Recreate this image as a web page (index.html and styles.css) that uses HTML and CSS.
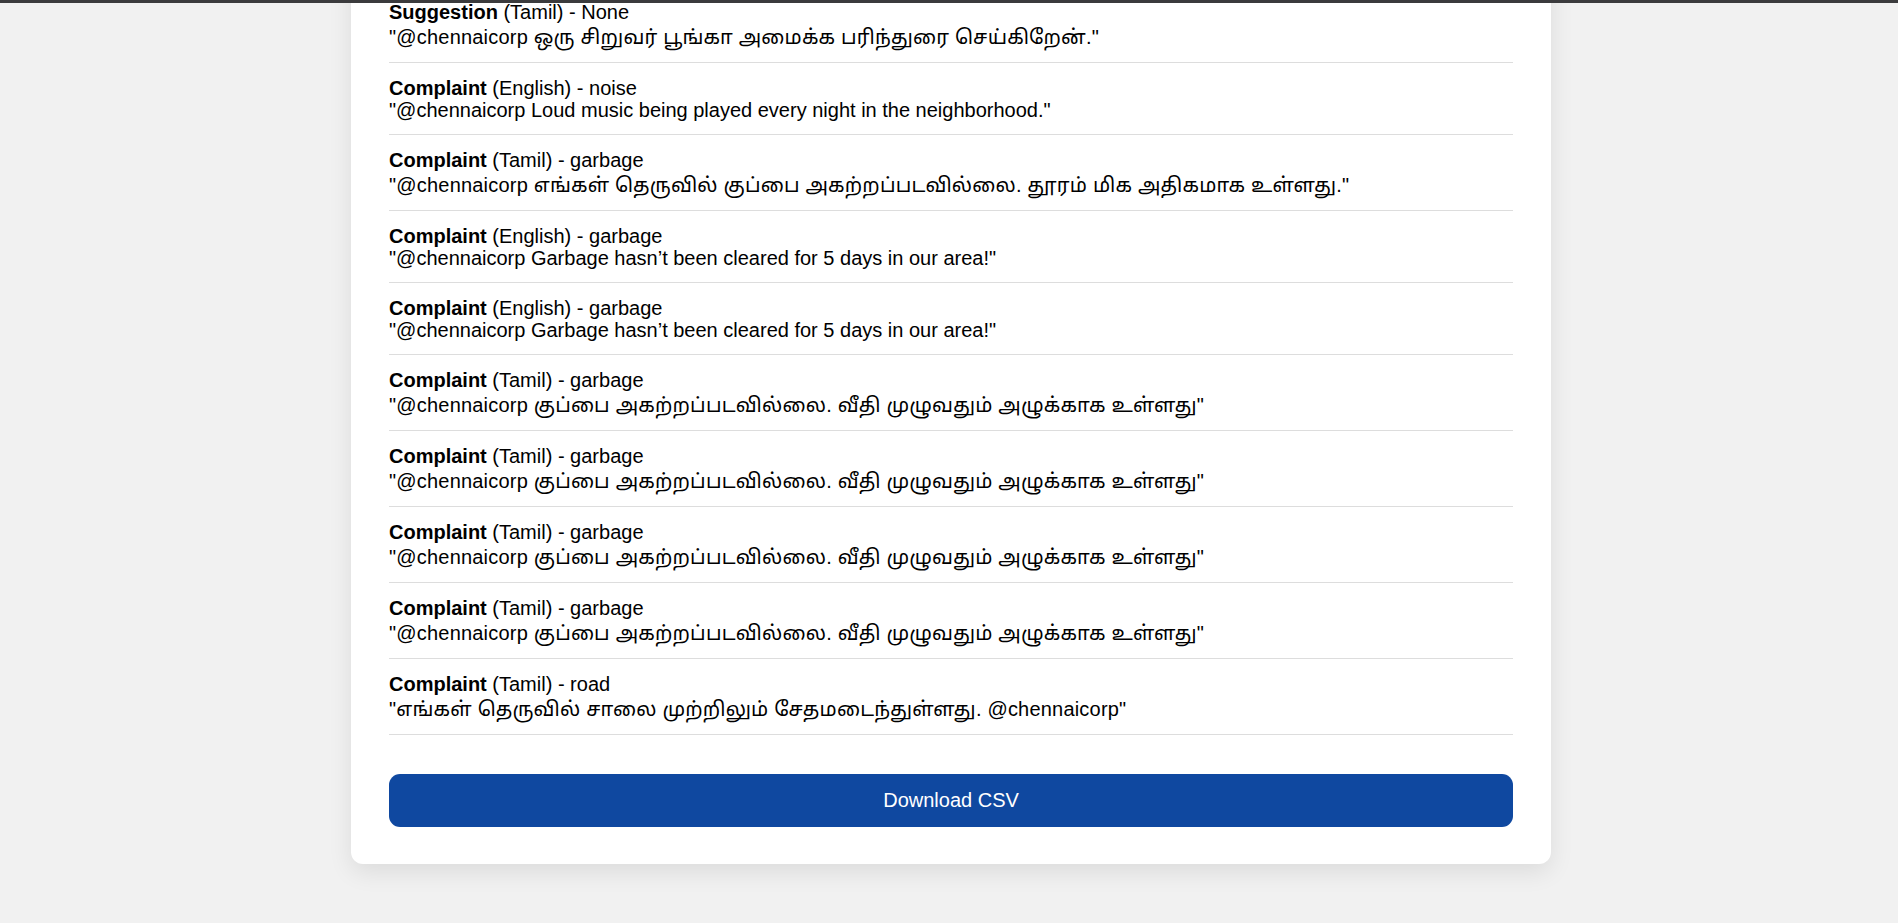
FILE: index.html
```html
<!DOCTYPE html>
<html lang="en">
<head>
<meta charset="utf-8">
<title>Chennai Corp Tweets</title>
<link rel="stylesheet" href="styles.css">
</head>
<body>
<div class="topbar"></div>
<main class="card">
  <ul class="list">
    <li class="item ta"><div class="title"><b>Suggestion</b> (Tamil) - None</div><div class="msg">"@chennaicorp ஒரு சிறுவர் பூங்கா அமைக்க பரிந்துரை செய்கிறேன்."</div></li>
    <li class="item"><div class="title"><b>Complaint</b> (English) - noise</div><div class="msg">"@chennaicorp Loud music being played every night in the neighborhood."</div></li>
    <li class="item ta"><div class="title"><b>Complaint</b> (Tamil) - garbage</div><div class="msg">"@chennaicorp எங்கள் தெருவில் குப்பை அகற்றப்படவில்லை. தூரம் மிக அதிகமாக உள்ளது."</div></li>
    <li class="item"><div class="title"><b>Complaint</b> (English) - garbage</div><div class="msg">"@chennaicorp Garbage hasn’t been cleared for 5 days in our area!"</div></li>
    <li class="item"><div class="title"><b>Complaint</b> (English) - garbage</div><div class="msg">"@chennaicorp Garbage hasn’t been cleared for 5 days in our area!"</div></li>
    <li class="item ta"><div class="title"><b>Complaint</b> (Tamil) - garbage</div><div class="msg">"@chennaicorp குப்பை அகற்றப்படவில்லை. வீதி முழுவதும் அழுக்காக உள்ளது"</div></li>
    <li class="item ta"><div class="title"><b>Complaint</b> (Tamil) - garbage</div><div class="msg">"@chennaicorp குப்பை அகற்றப்படவில்லை. வீதி முழுவதும் அழுக்காக உள்ளது"</div></li>
    <li class="item ta"><div class="title"><b>Complaint</b> (Tamil) - garbage</div><div class="msg">"@chennaicorp குப்பை அகற்றப்படவில்லை. வீதி முழுவதும் அழுக்காக உள்ளது"</div></li>
    <li class="item ta"><div class="title"><b>Complaint</b> (Tamil) - garbage</div><div class="msg">"@chennaicorp குப்பை அகற்றப்படவில்லை. வீதி முழுவதும் அழுக்காக உள்ளது"</div></li>
    <li class="item ta"><div class="title"><b>Complaint</b> (Tamil) - road</div><div class="msg">"எங்கள் தெருவில் சாலை முற்றிலும் சேதமடைந்துள்ளது. @chennaicorp"</div></li>
  </ul>
  <button class="download" type="button">Download CSV</button>
</main>
</body>
</html>
```

FILE: styles.css
```css
html, body {
  margin: 0;
  padding: 0;
}
body {
  background: #f1f1f1;
  font-family: "Liberation Sans", Arial, "Noto Sans Tamil", "Lohit Tamil", sans-serif;
  font-size: 20px;
  color: #000;
  padding: 0 0 60px 4px;
  overflow: hidden;
}
.topbar {
  position: fixed;
  top: 0;
  left: 0;
  right: 0;
  height: 3px;
  background: #3b3b3d;
  z-index: 5;
}
.card {
  width: 1200px;
  box-sizing: border-box;
  margin: -45px auto 0;
  padding: 32px 38px 37px;
  background: #fff;
  border-radius: 12px;
  box-shadow: 0 8px 24px rgba(0, 0, 0, 0.09);
}
.list {
  list-style: none;
  margin: 0;
  padding: 0;
}
.item {
  padding: 14px 0 13px;
  border-bottom: 1px solid #dddddd;
}
.title {
  height: 22px;
  line-height: 22px;
}
.title b {
  font-weight: 700;
}
.msg {
  height: 22px;
  line-height: 22px;
  white-space: nowrap;
}
.item.ta .msg {
  padding-top: 3px;
  padding-bottom: 1px;
  letter-spacing: 0.2px;
}
.download {
  display: block;
  width: 100%;
  height: 53px;
  margin-top: 39px;
  border: 0;
  border-radius: 11px;
  background: #0f48a0;
  color: #fff;
  font-family: "Liberation Sans", Arial, sans-serif;
  font-size: 20px;
  cursor: pointer;
}
```
